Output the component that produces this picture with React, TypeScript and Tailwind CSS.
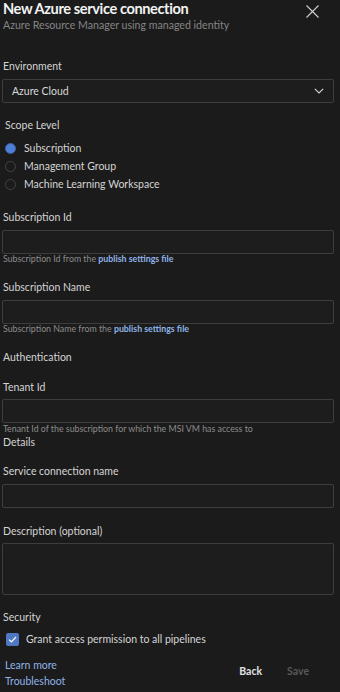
import React from "react";

const font = { fontFamily: 'Lato, "Open Sans", sans-serif' };

function Label({ children, className = "" }: { children: React.ReactNode; className?: string }) {
  return (
    <div className={"h-[14px] leading-[14px] text-[10.5px] text-[#d4d4d4] whitespace-nowrap " + className}>
      {children}
    </div>
  );
}

function Input({ className = "" }: { className?: string }) {
  return <div className={"h-[24px] ml-[2px] w-[332px] border border-[#3d3d3d] rounded-[2px] bg-[#1d1d1d] " + className} />;
}

function Helper({ children, className = "" }: { children: React.ReactNode; className?: string }) {
  return (
    <div className={"h-[10px] leading-[10px] text-[8.8px] text-[#8c8c8c] whitespace-nowrap pl-[3px] " + className}>
      {children}
    </div>
  );
}

function Radio({ label, checked }: { label: string; checked?: boolean }) {
  return (
    <div className="h-[18px] flex items-center pl-[5px]">
      {checked ? (
        <div className="w-[11px] h-[11px] rounded-full bg-[#4d7fd4] border border-[#3a62a8]" />
      ) : (
        <div className="w-[11px] h-[11px] rounded-full border border-[#444444]" />
      )}
      <span className="ml-[8px] text-[10.5px] text-[#d4d4d4] leading-[14px]">{label}</span>
    </div>
  );
}

export default function App() {
  return (
    <div className="w-[340px] h-[692px] bg-[#1b1b1b] overflow-hidden relative" style={font}>
      <div className="pl-[3px]">
        <div className="h-[18px] leading-[18px] text-[14.6px] font-bold text-[#f2f2f2] whitespace-nowrap tracking-[-0.4px]">
          New Azure service connection
        </div>
        <div className="h-[14px] leading-[14px] text-[10.6px] text-[#858585] whitespace-nowrap">
          Azure Resource Manager using managed identity
        </div>
      </div>
      <svg className="absolute left-[306px] top-[5px]" width="13" height="13" viewBox="0 0 13 13">
        <path d="M0.5 0.5 L12.5 12.5 M12.5 0.5 L0.5 12.5" stroke="#cfcfcf" strokeWidth="1.1" fill="none" />
      </svg>

      <Label className="mt-[27px] pl-[3px]">Environment</Label>
      <div className="mt-[6px] h-[24px] ml-[2px] w-[332px] border border-[#3d3d3d] rounded-[2px] bg-[#1d1d1d] flex items-center justify-between pl-[9px] pr-[9px]">
        <span className="text-[10.5px] text-[#d8d8d8] leading-[14px]">Azure Cloud</span>
        <svg width="10" height="6" viewBox="0 0 10 6">
          <path d="M0.8 0.8 L5 5 L9.2 0.8" stroke="#cfcfcf" strokeWidth="1.2" fill="none" />
        </svg>
      </div>

      <Label className="mt-[15px] pl-[5px]">Scope Level</Label>
      <div className="mt-[7px]">
        <Radio label="Subscription" checked />
        <Radio label="Management Group" />
        <Radio label="Machine Learning Workspace" />
      </div>

      <Label className="mt-[17px] pl-[3px]">Subscription Id</Label>
      <Input className="mt-[6px]" />
      <Helper>
        Subscription Id from the <span className="text-[#8fb3e8] font-bold">publish settings file</span>
      </Helper>

      <Label className="mt-[16px] pl-[3px]">Subscription Name</Label>
      <Input className="mt-[6px]" />
      <Helper>
        Subscription Name from the <span className="text-[#8fb3e8] font-bold">publish settings file</span>
      </Helper>

      <Label className="mt-[16px] pl-[3px]">Authentication</Label>
      <Label className="mt-[16px] pl-[3px]">Tenant Id</Label>
      <Input className="mt-[5px]" />
      <Helper className="mt-[1px]">Tenant Id of the subscription for which the MSI VM has access to</Helper>
      <Label className="mt-[1px] pl-[3px]">Details</Label>

      <Label className="mt-[15px] pl-[3px]">Service connection name</Label>
      <Input className="mt-[6px]" />

      <Label className="mt-[16px] pl-[3px]">Description (optional)</Label>
      <div className="mt-[5px] h-[52px] ml-[2px] w-[332px] border border-[#3d3d3d] rounded-[2px] bg-[#1d1d1d]" />

      <Label className="mt-[15px] pl-[3px]">Security</Label>
      <div className="mt-[6px] h-[18px] flex items-center pl-[6px]">
        <div className="w-[13px] h-[13px] rounded-[2px] bg-[#4f78c4] flex items-center justify-center">
          <svg width="9" height="7" viewBox="0 0 9 7">
            <path d="M1 3.6 L3.4 5.8 L8 1" stroke="#ffffff" strokeWidth="1.2" fill="none" />
          </svg>
        </div>
        <span className="ml-[7px] text-[10.5px] text-[#d4d4d4] leading-[14px]">Grant access permission to all pipelines</span>
      </div>

      <div className="mt-[10px] flex items-start">
        <div className="pl-[5px]">
          <div className="h-[16px] leading-[14px] text-[10.5px] text-[#8fb3e8]">Learn more</div>
          <div className="h-[14px] leading-[14px] text-[10.5px] text-[#8fb3e8]">Troubleshoot</div>
        </div>
        <div className="ml-auto mr-[31px] mt-[6px] flex items-center gap-[25px]">
          <span className="text-[10.5px] font-bold text-[#e2e2e2] leading-[14px]">Back</span>
          <span className="text-[10.5px] font-bold text-[#595959] leading-[14px]">Save</span>
        </div>
      </div>
    </div>
  );
}
